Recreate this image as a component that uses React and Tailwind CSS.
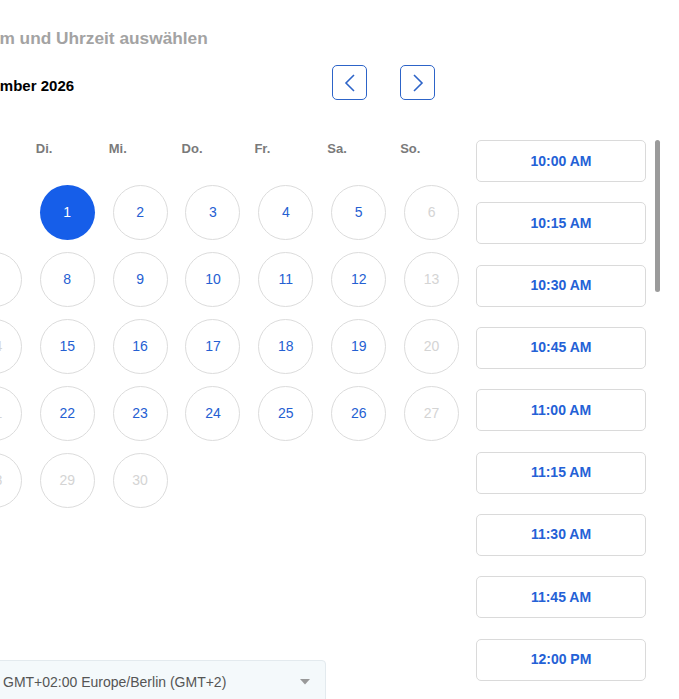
import React from "react";

const days = ["Mo.", "Di.", "Mi.", "Do.", "Fr.", "Sa.", "So."];
const times = ["10:00 AM", "10:15 AM", "10:30 AM", "10:45 AM", "11:00 AM", "11:15 AM", "11:30 AM", "11:45 AM", "12:00 PM", "12:15 PM"];

// September 2026 starts on Tuesday
const cells = [null];
for (let d = 1; d <= 30; d++) cells.push(d);

const isDisabled = (d, i) => {
  const col = i % 7;
  return col === 6 || col === 0 || d >= 27;
};

export default function App() {
  return (
    <div className="relative w-[679px] h-[699px] overflow-hidden bg-white" style={{ fontFamily: '"Liberation Sans", Arial, sans-serif' }}>
      <div className="-ml-[42px] flex">
        {/* CALENDAR */}
        <div className="w-[510px] shrink-0">
          <h2 className="mt-[29px] ml-[3px] text-[17.3px] font-bold text-[#a3a3a3] leading-[18px]">Datum und Uhrzeit auswählen</h2>

          <div className="mt-[18px] flex items-center w-[477px]">
            <span className="flex-1 ml-[1px] pt-[8px] text-[15px] font-bold text-black">September 2026</span>
            <div className="flex gap-[33px]">
              <button className="w-[35px] h-[35px] rounded-[5px] border border-[#2d64c8] flex items-center justify-center">
                <svg width="12" height="18" viewBox="0 0 12 18" fill="none" stroke="#2d64c8" strokeWidth="1.6">
                  <polyline points="10,1 2,9 10,17" />
                </svg>
              </button>
              <button className="w-[35px] h-[35px] rounded-[5px] border border-[#2d64c8] flex items-center justify-center">
                <svg width="12" height="18" viewBox="0 0 12 18" fill="none" stroke="#2d64c8" strokeWidth="1.6">
                  <polyline points="2,1 10,9 2,17" />
                </svg>
              </button>
            </div>
          </div>

          <div className="mt-[42px] grid grid-cols-7">
            {days.map((d) => (
              <span key={d} className="pl-[5px] text-[13px] font-bold text-[#7a7a7a] leading-[14px]">{d}</span>
            ))}
          </div>

          <div className="mt-[29px] grid grid-cols-7 gap-y-[12px]">
            {cells.map((d, i) => (
              <div key={i} className="flex justify-center">
                {d === null ? (
                  <div className="w-[55px] h-[55px]" />
                ) : d === 1 ? (
                  <div className="w-[55px] h-[55px] rounded-full bg-[#165ee9] flex items-center justify-center text-[14px] text-white">1</div>
                ) : (
                  <div className={`w-[55px] h-[55px] rounded-full border border-[#dcdcdc] flex items-center justify-center text-[14px] ${isDisabled(d, i) ? "text-[#d4d4d4]" : "text-[#2560d2]"}`}>{d}</div>
                )}
              </div>
            ))}
          </div>

          <div className="mt-[152px] ml-[30px] w-[338px] h-[44px] rounded-[4px] border border-[#e3eaee] bg-[#f4f9fb] flex items-center justify-between pl-[14px] pr-[15px]">
            <span className="text-[14px] text-[#555]">GMT+02:00 Europe/Berlin (GMT+2)</span>
            <svg width="10" height="6" viewBox="0 0 10 6"><polygon points="0,0 10,0 5,5.5" fill="#999" /></svg>
          </div>
        </div>

        {/* TIMES */}
        <div className="ml-[8px] mt-[140px] w-[170px] shrink-0 flex flex-col gap-[20.33px]">
          {times.map((t) => (
            <button key={t} className="h-[42px] shrink-0 rounded-[5px] border border-[#dadada] bg-white text-[14px] font-bold text-[#2461d6]">{t}</button>
          ))}
        </div>
      </div>

      {/* scrollbar thumb */}
      <div className="absolute left-[655px] top-[140px] w-[5px] h-[152px] rounded-[3px] bg-[#9b9b9b]" />
    </div>
  );
}
